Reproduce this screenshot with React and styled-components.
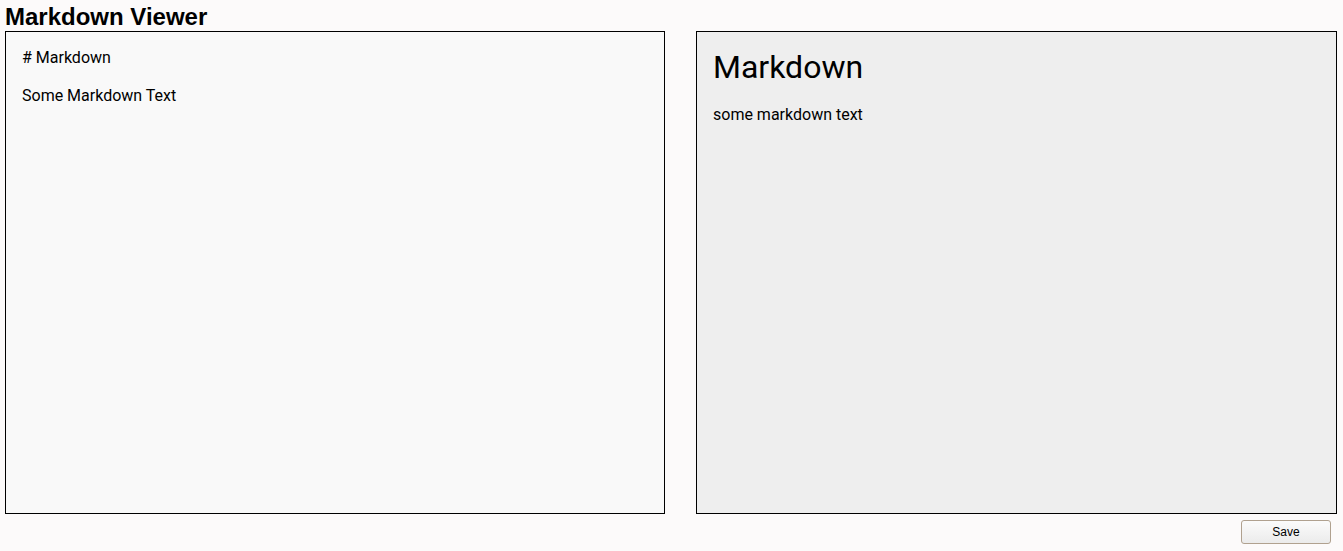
import React, { useState } from 'react'
import styled, { createGlobalStyle } from 'styled-components'

const GlobalStyle = createGlobalStyle`
  html, body {
    margin: 0;
    background: #fcfafa;
  }
  body {
    font-family: Roboto, "Liberation Sans", sans-serif;
  }
`

const Page = styled.div`
  display: flex;
  flex-direction: column;
  height: 551px;
  padding: 3px 6px 0 5px;
  box-sizing: border-box;
`

const Title = styled.h1`
  margin: 0;
  font-family: "Liberation Sans", Arial, sans-serif;
  font-size: 24px;
  font-weight: bold;
  line-height: 28px;
  color: #000;
`

const Panes = styled.div`
  display: grid;
  grid-template-columns: 660px 641px;
  column-gap: 31px;
  height: 483px;
`

const Editor = styled.textarea`
  margin: 0;
  box-sizing: border-box;
  width: 100%;
  height: 100%;
  padding: 16px 16px 15px;
  border: 1px solid #000;
  border-radius: 0;
  background: #f9f9f9;
  font-family: Roboto, sans-serif;
  font-size: 16px;
  line-height: 19px;
  color: #000;
  resize: none;
  outline: none;
`

const Preview = styled.div`
  box-sizing: border-box;
  height: 100%;
  padding: 17px 16px 16px;
  border: 1px solid #000;
  background: #eeeeee;
  color: #000;

  h1 {
    margin: 0 0 19px;
    font-size: 32px;
    font-weight: normal;
    line-height: 37px;
  }

  p {
    margin: 0;
    font-size: 16px;
    line-height: 19px;
  }
`

const Footer = styled.div`
  display: flex;
  justify-content: flex-end;
  padding: 6px 6px 0 0;
`

const SaveButton = styled.button`
  width: 90px;
  height: 24px;
  border: 1px solid #b0a18f;
  border-radius: 3px;
  background: linear-gradient(#fbfbfb, #ebebeb);
  font-family: "Liberation Sans", Arial, sans-serif;
  font-size: 12px;
  color: #000;
  cursor: pointer;
`

const App = () => {
  const [text, setText] = useState('# Markdown\n\nSome Markdown Text')

  return (
    <>
      <GlobalStyle />
      <Page>
        <Title>Markdown Viewer</Title>
        <Panes>
          <Editor value={text} onChange={e => setText(e.target.value)} spellCheck={false} />
          <Preview>
            <h1>Markdown</h1>
            <p>some markdown text</p>
          </Preview>
        </Panes>
        <Footer>
          <SaveButton>Save</SaveButton>
        </Footer>
      </Page>
    </>
  )
}

export default App
